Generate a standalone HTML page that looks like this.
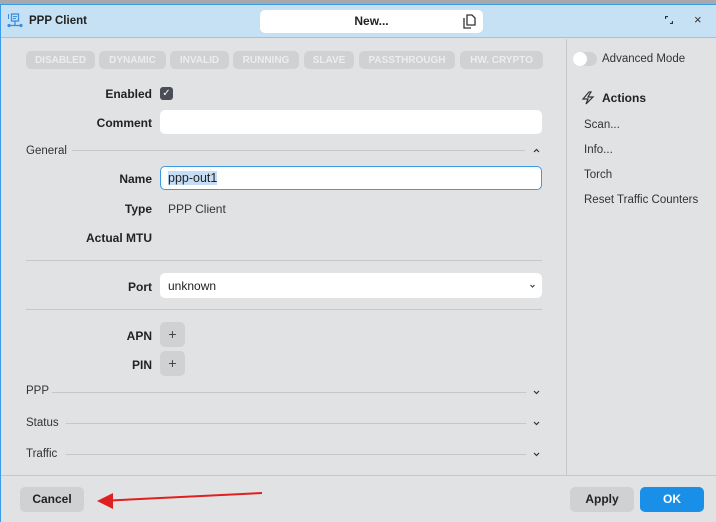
<!DOCTYPE html>
<html><head><style>
*{box-sizing:border-box;margin:0;padding:0}
body{width:716px;height:522px;background:#e1e2e4;font-family:"Liberation Sans",sans-serif;color:#222;position:relative;overflow:hidden;font-size:12px}
.a{position:absolute}
.lbl{position:absolute;right:564px;font-weight:bold;font-size:12px;color:#222}
.badge{position:absolute;top:51px;height:18px;background:#cfd1d3;border-radius:5px;color:#eceded;font-weight:bold;font-size:10px;display:flex;align-items:center;justify-content:center;padding-top:1px}
.inp{position:absolute;left:160px;width:382px;background:#fff;border-radius:5px}
.sec{position:absolute;left:26px;font-size:11.5px;color:#333}
.line{position:absolute;height:1px;background:#c5c7ca}
.btn{position:absolute;border-radius:5px;font-weight:bold;text-align:center;line-height:25px;height:25px;width:64px;font-size:12px}
.act{position:absolute;left:584px;font-size:11.5px;color:#333}
.chev{position:absolute;left:533px;width:7px;height:5px}
</style></head><body>
<div class="a" style="left:0;top:0;width:716px;height:4px;background:#a6a8ab"></div>
<div class="a" style="left:0;top:4px;width:716px;height:1px;background:#3a9be6"></div>
<div class="a" style="left:0;top:5px;width:1px;height:517px;background:#3a9be6"></div>
<div class="a" style="left:1px;top:5px;width:715px;height:33px;background:#c6e0f4;border-bottom:1px solid #b5bcc3"></div>
<svg class="a" style="left:7px;top:13px" width="16" height="16" viewBox="0 0 16 16"><rect x="4.5" y="1" width="7" height="7" fill="none" stroke="#3a8ee0" stroke-width="1.3"/><line x1="6" y1="3.5" x2="10" y2="3.5" stroke="#3a8ee0"/><line x1="6" y1="5.5" x2="9" y2="5.5" stroke="#3a8ee0"/><line x1="1.5" y1="1" x2="1.5" y2="6" stroke="#3a8ee0"/><line x1="8" y1="8" x2="8" y2="12" stroke="#3a8ee0" stroke-width="1.3"/><line x1="2" y1="12.5" x2="14" y2="12.5" stroke="#3a8ee0" stroke-width="1.3"/><circle cx="2" cy="12.5" r="1.6" fill="#3a8ee0"/><circle cx="14" cy="12.5" r="1.6" fill="#3a8ee0"/></svg>
<div class="a" style="left:29px;top:15px;font-weight:bold;font-size:11.5px">PPP Client</div>
<div class="a" style="left:260px;top:10px;width:223px;height:23px;background:#fff;border-radius:5px;text-align:center;line-height:23px;font-weight:bold;font-size:12px">New...</div>
<svg class="a" style="left:463px;top:14px" width="14" height="15" viewBox="0 0 14 15"><path d="M4 1h5l3 3v7H4z M1 4v10h7" fill="none" stroke="#333" stroke-width="1.3"/></svg>
<svg class="a" style="left:665px;top:16px" width="8" height="8" viewBox="0 0 8 8"><path d="M0.5 3V0.5H3 M5 7.5H7.5V5" fill="none" stroke="#333" stroke-width="1.2"/></svg>
<div class="a" style="left:694px;top:12px;font-size:13px;color:#333">×</div>

<div class="badge" style="left:26px;width:69px">DISABLED</div>
<div class="badge" style="left:99px;width:67px">DYNAMIC</div>
<div class="badge" style="left:170px;width:59px">INVALID</div>
<div class="badge" style="left:233px;width:66px">RUNNING</div>
<div class="badge" style="left:304px;width:50px">SLAVE</div>
<div class="badge" style="left:359px;width:96px">PASSTHROUGH</div>
<div class="badge" style="left:460px;width:83px">HW. CRYPTO</div>

<div class="lbl" style="top:87px">Enabled</div>
<div class="a" style="left:160px;top:87px;width:13px;height:13px;background:#4a4d55;border-radius:3px;color:#fff;font-size:10px;line-height:13px;text-align:center">✓</div>
<div class="lbl" style="top:116px">Comment</div>
<div class="inp" style="top:110px;height:24px"></div>

<div class="sec" style="top:145px">General</div>
<div class="line" style="left:72px;top:150px;width:453px"></div>
<svg class="chev" style="top:148px" viewBox="0 0 7 5"><path d="M1 4L3.5 1.5L6 4" fill="none" stroke="#333" stroke-width="1.2"/></svg>

<div class="lbl" style="top:172px">Name</div>
<div class="inp" style="top:166px;height:24px;border:1px solid #3a9be6"><span style="position:absolute;left:7px;top:4px;background:#c5def5;font-size:12.5px">ppp-out1</span></div>
<div class="lbl" style="top:202px">Type</div>
<div class="a" style="left:168px;top:202px;font-size:12px;color:#333">PPP Client</div>
<div class="lbl" style="top:231px">Actual MTU</div>
<div class="line" style="left:26px;top:260px;width:516px"></div>
<div class="lbl" style="top:280px">Port</div>
<div class="inp" style="top:273px;height:25px"><span style="position:absolute;left:8px;top:6px;font-size:12px">unknown</span><svg style="position:absolute;right:7px;top:11px" width="5" height="4" viewBox="0 0 5 4"><path d="M0.5 1L2.5 3L4.5 1" fill="none" stroke="#333"/></svg></div>
<div class="line" style="left:26px;top:309px;width:516px"></div>
<div class="lbl" style="top:329px">APN</div>
<div class="a" style="left:160px;top:322px;width:25px;height:25px;background:#cfd1d3;border-radius:5px;text-align:center;line-height:24px;font-size:14px;color:#444">+</div>
<div class="lbl" style="top:358px">PIN</div>
<div class="a" style="left:160px;top:351px;width:25px;height:25px;background:#cfd1d3;border-radius:5px;text-align:center;line-height:24px;font-size:14px;color:#444">+</div>

<div class="sec" style="top:385px">PPP</div>
<div class="line" style="left:52px;top:392px;width:474px"></div>
<svg class="chev" style="top:390px" viewBox="0 0 7 5"><path d="M1 1L3.5 3.5L6 1" fill="none" stroke="#333" stroke-width="1.2"/></svg>
<div class="sec" style="top:417px">Status</div>
<div class="line" style="left:66px;top:423px;width:460px"></div>
<svg class="chev" style="top:421px" viewBox="0 0 7 5"><path d="M1 1L3.5 3.5L6 1" fill="none" stroke="#333" stroke-width="1.2"/></svg>
<div class="sec" style="top:448px">Traffic</div>
<div class="line" style="left:66px;top:454px;width:460px"></div>
<svg class="chev" style="top:452px" viewBox="0 0 7 5"><path d="M1 1L3.5 3.5L6 1" fill="none" stroke="#333" stroke-width="1.2"/></svg>

<div class="a" style="left:566px;top:39px;width:1px;height:436px;background:#c5c7ca"></div>
<div class="a" style="left:1px;top:475px;width:715px;height:1px;background:#c5c7ca"></div>

<div class="a" style="left:573px;top:52px;width:24px;height:14px;background:#cfd1d3;border-radius:7px"></div>
<div class="a" style="left:573px;top:52px;width:14px;height:14px;background:#fff;border-radius:7px"></div>
<div class="a" style="left:602px;top:53px;font-size:11.5px;color:#333">Advanced Mode</div>
<svg class="a" style="left:581px;top:91px" width="14" height="14" viewBox="0 0 14 14"><path d="M8 1L2 8h5l-2 5 7-7H7l3-5z" fill="none" stroke="#333" stroke-width="1.2"/></svg>
<div class="a" style="left:602px;top:91px;font-weight:bold;font-size:12px">Actions</div>
<div class="act" style="top:119px">Scan...</div>
<div class="act" style="top:144px">Info...</div>
<div class="act" style="top:169px">Torch</div>
<div class="act" style="top:194px">Reset Traffic Counters</div>

<div class="btn" style="left:20px;top:487px;background:#cfd1d3;color:#222">Cancel</div>
<div class="btn" style="left:570px;top:487px;background:#cfd1d3;color:#222">Apply</div>
<div class="btn" style="left:640px;top:487px;background:#1a8fe8;color:#fff">OK</div>

<svg class="a" style="left:0;top:0" width="716" height="522"><line x1="262" y1="493" x2="110" y2="500.5" stroke="#e02020" stroke-width="2"/><polygon points="97,501 113,493 113,509" fill="#e02020"/></svg>
</body></html>
